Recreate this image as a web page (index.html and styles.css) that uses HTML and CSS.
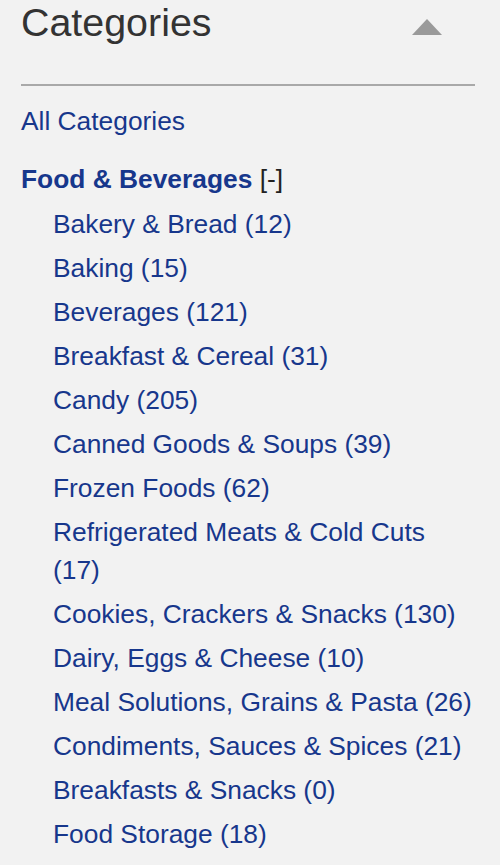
FILE: index.html
```html
<!DOCTYPE html>
<html lang="en">
<head>
    <meta charset="UTF-8">
    <meta name="viewport" content="width=device-width, initial-scale=1.0">
    <title>Categories</title>
    <link rel="stylesheet" href="styles.css">
</head>
<body>
    <div class="sidebar">
        <div class="sidebar-header">
            <h2>Categories</h2>
            <span class="toggle"></span>
        </div>

        <ul class="category-list">
            <li class="all"><a href="#">All Categories</a></li>
            <li class="parent">
                <a href="#" class="parent-link">Food &amp; Beverages</a> <span class="collapse">[-]</span>
                <ul class="sub-list">
                    <li><a href="#">Bakery &amp; Bread (12)</a></li>
                    <li><a href="#">Baking (15)</a></li>
                    <li><a href="#">Beverages (121)</a></li>
                    <li><a href="#">Breakfast &amp; Cereal (31)</a></li>
                    <li><a href="#">Candy (205)</a></li>
                    <li><a href="#">Canned Goods &amp; Soups (39)</a></li>
                    <li><a href="#">Frozen Foods (62)</a></li>
                    <li><a href="#">Refrigerated Meats &amp; Cold Cuts (17)</a></li>
                    <li><a href="#">Cookies, Crackers &amp; Snacks (130)</a></li>
                    <li><a href="#">Dairy, Eggs &amp; Cheese (10)</a></li>
                    <li><a href="#">Meal Solutions, Grains &amp; Pasta (26)</a></li>
                    <li><a href="#">Condiments, Sauces &amp; Spices (21)</a></li>
                    <li><a href="#">Breakfasts &amp; Snacks (0)</a></li>
                    <li><a href="#">Food Storage (18)</a></li>
                </ul>
            </li>
        </ul>
    </div>
</body>
</html>
```

FILE: styles.css
```css
body {
    margin: 0;
    background-color: #f2f2f2;
    font-family: "Liberation Sans", Arial, Helvetica, sans-serif;
}
.sidebar {
    padding: 0 25px 0 21px;
}
.sidebar-header {
    display: flex;
    justify-content: space-between;
    align-items: flex-start;
    padding-bottom: 39px;
    border-bottom: 2px solid #a9a9a9;
}
.sidebar-header h2 {
    margin: 0;
    font-size: 39.4px;
    line-height: 45px;
    font-weight: normal;
    color: #333;
}
.toggle {
    width: 0;
    height: 0;
    margin-top: 19px;
    margin-right: 33px;
    border-left: 15px solid transparent;
    border-right: 15px solid transparent;
    border-bottom: 16px solid #9a9a9a;
}
.category-list {
    list-style: none;
    margin: 16px 0 0;
    padding: 0;
    font-size: 26.35px;
    line-height: 38px;
}
.category-list a {
    color: #17378c;
    text-decoration: none;
}
.all {
    margin-bottom: 20px;
}
.parent-link {
    font-weight: bold;
}
.collapse {
    color: #222;
}
.sub-list {
    list-style: none;
    margin: 7px 0 0;
    padding: 0 0 0 32px;
}
.sub-list li {
    margin-bottom: 6px;
}
```
